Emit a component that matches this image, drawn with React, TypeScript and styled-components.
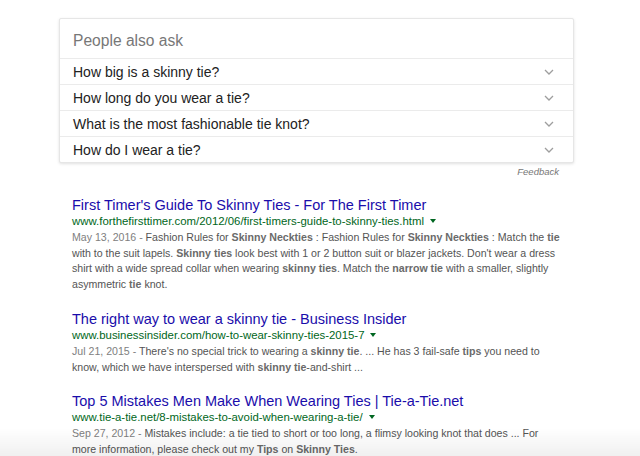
import React from "react";
import styled, { createGlobalStyle } from "styled-components";

const GlobalStyle = createGlobalStyle`
  html, body {
    margin: 0;
    padding: 0;
    background: #fff;
    font-family: Arial, "Liberation Sans", sans-serif;
  }
`;

const Page = styled.div`
  padding: 18px 0 0 59px;
  width: 640px;
  height: 456px;
  box-sizing: border-box;
  overflow: hidden;
`;

const AskCard = styled.div`
  width: 513px;
  border: 1px solid #e6e6e6;
  border-radius: 2px;
  box-shadow: 0 1px 3px rgba(0, 0, 0, 0.12);
  background: #fff;
`;

const AskHeader = styled.div`
  height: 39px;
  padding: 12px 0 0 13px;
  box-sizing: border-box;
  font-size: 15.6px;
  line-height: 20px;
  color: #777;
`;

const Question = styled.div`
  display: flex;
  align-items: center;
  justify-content: space-between;
  height: 26px;
  box-sizing: border-box;
  border-top: 1px solid #ebebeb;
  padding: 0 19px 0 13px;
  font-size: 14px;
  color: #222;
`;

const Chevron = styled.svg`
  width: 10px;
  height: 6px;
  flex: none;
`;

const FeedbackLink = styled.div`
  width: 513px;
  box-sizing: border-box;
  padding: 3px 13px 0 0;
  text-align: right;
  font-size: 9.5px;
  font-style: italic;
  color: #777;
`;

const Results = styled.div`
  padding: 19px 0 0 13px;
  display: flex;
  flex-direction: column;
  gap: 17px;
`;

const Result = styled.div`
  display: flex;
  flex-direction: column;
`;

const Title = styled.a`
  font-size: 14.5px;
  line-height: 18px;
  color: #1a0dab;
  text-decoration: none;
  white-space: nowrap;
`;

const Url = styled.div`
  font-size: 11.4px;
  line-height: 15px;
  color: #006621;
  white-space: nowrap;
`;

const Caret = styled.span`
  display: inline-block;
  margin-left: 6px;
  width: 0;
  height: 0;
  border-left: 3px solid transparent;
  border-right: 3px solid transparent;
  border-top: 4px solid #006621;
  vertical-align: 2px;
`;

const Snippet = styled.div`
  padding-top: 1px;
  font-size: 10.6px;
  line-height: 15.7px;
  color: #545454;
  white-space: nowrap;

  b {
    color: #6a6a6a;
  }
`;

const SnippetLine = styled.div``;

const Date = styled.span`
  color: #808080;
`;

const BottomFade = styled.div`
  position: fixed;
  left: 0;
  right: 0;
  bottom: 0;
  height: 28px;
  pointer-events: none;
  background: linear-gradient(rgba(0, 0, 0, 0), rgba(0, 0, 0, 0.06));
`;

const questions = [
  "How big is a skinny tie?",
  "How long do you wear a tie?",
  "What is the most fashionable tie knot?",
  "How do I wear a tie?",
];

const ChevronIcon = () => (
  <Chevron viewBox="0 0 10 6">
    <path d="M1 1l4 4 4-4" fill="none" stroke="#9e9e9e" strokeWidth="1.3" />
  </Chevron>
);

export default function App() {
  return (
    <Page>
      <GlobalStyle />
      <AskCard>
        <AskHeader>People also ask</AskHeader>
        {questions.map((q) => (
          <Question key={q}>
            <span>{q}</span>
            <ChevronIcon />
          </Question>
        ))}
      </AskCard>
      <FeedbackLink>Feedback</FeedbackLink>

      <Results>
        <Result>
          <Title href="#">First Timer's Guide To Skinny Ties - For The First Timer</Title>
          <Url>
            www.forthefirsttimer.com/2012/06/first-timers-guide-to-skinny-ties.html
            <Caret />
          </Url>
          <Snippet>
            <SnippetLine>
              <Date>May 13, 2016 - </Date>Fashion Rules for <b>Skinny Neckties</b> : Fashion
              Rules for <b>Skinny Neckties</b> : Match the <b>tie</b>
            </SnippetLine>
            <SnippetLine>
              with to the suit lapels. <b>Skinny ties</b> look best with 1 or 2 button suit or
              blazer jackets. Don't wear a dress
            </SnippetLine>
            <SnippetLine>
              shirt with a wide spread collar when wearing <b>skinny ties</b>. Match the{" "}
              <b>narrow tie</b> with a smaller, slightly
            </SnippetLine>
            <SnippetLine>
              asymmetric <b>tie</b> knot.
            </SnippetLine>
          </Snippet>
        </Result>
        <Result>
          <Title href="#">The right way to wear a skinny tie - Business Insider</Title>
          <Url>
            www.businessinsider.com/how-to-wear-skinny-ties-2015-7
            <Caret />
          </Url>
          <Snippet>
            <SnippetLine>
              <Date>Jul 21, 2015 - </Date>There's no special trick to wearing a{" "}
              <b>skinny tie</b>. ... He has 3 fail-safe <b>tips</b> you need to
            </SnippetLine>
            <SnippetLine>
              know, which we have interspersed with <b>skinny tie</b>-and-shirt ...
            </SnippetLine>
          </Snippet>
        </Result>
        <Result>
          <Title href="#">Top 5 Mistakes Men Make When Wearing Ties | Tie-a-Tie.net</Title>
          <Url>
            www.tie-a-tie.net/8-mistakes-to-avoid-when-wearing-a-tie/
            <Caret />
          </Url>
          <Snippet>
            <SnippetLine>
              <Date>Sep 27, 2012 - </Date>Mistakes include: a tie tied to short or too long, a
              flimsy looking knot that does ... For
            </SnippetLine>
            <SnippetLine>
              more information, please check out my <b>Tips</b> on <b>Skinny Ties</b>.
            </SnippetLine>
          </Snippet>
        </Result>
      </Results>
      <BottomFade />
    </Page>
  );
}
